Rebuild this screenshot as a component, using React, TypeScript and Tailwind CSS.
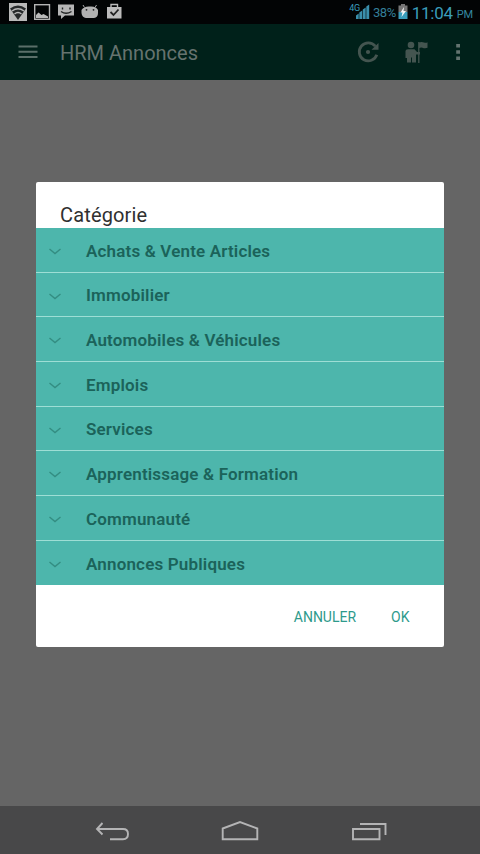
const categories = [
  'Achats & Vente Articles',
  'Immobilier',
  'Automobiles & Véhicules',
  'Emplois',
  'Services',
  'Apprentissage & Formation',
  'Communauté',
  'Annonces Publiques',
];

function StatusBar() {
  return (
    <div className="flex h-6 items-center justify-between bg-[#020405] pr-[7px]">
      <svg width="130" height="24" viewBox="0 0 130 24" fill="none">
        <rect x="9" y="3" width="18" height="18" fill="#b9b9b9" />
        <path d="M10 8.500Q18 2.500 26 8.500L18 20Z" fill="#26292a" />
        <path d="M12 11Q18 6.500 24 11M14.500 14Q18 11 21.500 14" stroke="#b9b9b9" strokeWidth="1.300" />
        <rect x="34.700" y="4.700" width="14.800" height="14.600" stroke="#b4b4b4" strokeWidth="1.400" />
        <path d="M36 18V15L38.500 12.500L41.500 15L43.500 14L48 16.500V18Z" fill="#b9b9b9" />
        <path d="M58 4.500H74V15.500H65L61 19V15.500H58Z" fill="#b5b5b5" />
        <path d="M62.500 7.500V9.500M70 7.500V9.500M61 11.500Q66 15 71.500 11.500" stroke="#202323" strokeWidth="1.400" />
        <path d="M84.500 7.500L83 5M95 7.500L96.500 5" stroke="#aaa" />
        <path d="M81.500 10Q84 6 90 6.500Q96 6 98 10V13Q98 17.500 94 18H86Q82 17.500 81.500 13Z" fill="#b2b2b2" />
        <circle cx="86.500" cy="9.800" r=".9" fill="#222" />
        <circle cx="93.500" cy="9.800" r=".9" fill="#222" />
        <path d="M107 7H121.500V18.500H107Z" fill="#bcbcbc" />
        <path d="M111 7V4.500H117.500V7" stroke="#bcbcbc" strokeWidth="1.400" />
        <path d="M110.500 12L113.500 15L118.500 9.500" stroke="#222" strokeWidth="1.800" />
      </svg>
      <div className="flex h-6 items-center text-[#3a9dbb]">
        <span className="-mr-[5px] mb-[7px] text-[9px] leading-none tracking-[-0.3px]">4G</span>
        <svg width="15" height="24" viewBox="1 0 15 24" fill="#3a8fac">
          <path d="M2 19V15.500L4.700 13.500V19ZM5.300 19V12.500L8.200 10.500V19ZM8.800 19V9.500L11.700 7.500V19ZM12.300 19V6.500L15.200 4.500V19Z" />
        </svg>
        <span className="ml-[3px] mt-[2px] text-[13px] leading-6 tracking-[-0.45px] text-[#347f98]">38%</span>
        <svg width="10" height="24" viewBox="0 0 10 24" className="ml-[2px]">
          <path d="M3 4H7V5.500H9.500V12H.5V5.500H3Z" fill="#777" />
          <path d="M.5 12H9.500V19H.5Z" fill="#3a9dbb" />
          <path d="M6 7L2.500 12.500H4.500L3.500 17L8 11H5.500Z" fill="#f5f5f5" />
        </svg>
        <span className="ml-[4px] mt-px text-[17px] leading-6 tracking-[-0.25px] text-[#3a9dbb]">11:04</span>
        <span className="ml-[4px] mt-[4px] text-[11px] leading-none tracking-[-0.2px] text-[#3587a0]">PM</span>
      </div>
    </div>
  );
}

function AppBar() {
  return (
    <header className="flex h-14 items-center bg-[#00211a] text-[#66736f]">
      <svg width="60" height="56" viewBox="0 0 60 56" stroke="#5a6f69" strokeWidth="2">
        <path d="M18.500 22.500H37.500M18.500 27.700H37.500M18.500 33H37.500" />
      </svg>
      <h1 className="flex-1 pt-px text-[20px]">HRM Annonces</h1>
      <svg width="130" height="56" viewBox="350 24 130 56" fill="none">
        <path d="M375.300 46.200A9 9 0 1 0 376.800 54.800" stroke="#445550" strokeWidth="2.800" />
        <path d="M371.500 49.800H378.500V43Z" fill="#445550" />
        <circle cx="368" cy="52" r="2.100" fill="#445550" />
        <circle cx="411" cy="45" r="3.300" fill="#445550" />
        <path d="M405.500 51Q405.500 49.200 408 49.200H414.500L417 52H420V54.500H416V62.500H412V57.500H411V62.500H407V58H405.500Z" fill="#445550" />
        <path d="M418.800 42V63" stroke="#445550" strokeWidth="1.300" />
        <path d="M419 42.500Q421.500 41.300 424 42.500Q426 43.200 427.500 42.300V47.800Q425 48.800 422.500 47.700Q421 47 419 48Z" fill="#445550" />
        <path d="M456.200 44H460V47.500H456.200ZM456.200 50.200H460V53.700H456.200ZM456.200 56.500H460V60H456.200Z" fill="#63736f" />
      </svg>
    </header>
  );
}

function CategoryDialog() {
  return (
    <section className="flex h-[465px] w-[408px] flex-col overflow-hidden rounded-[2px] bg-white">
      <h2 className="h-[46px] shrink-0 pl-6 pt-[21px] text-[20px] leading-6 tracking-[0.15px] text-[#303030]">Catégorie</h2>
      <ul className="grid h-[357px] shrink-0 auto-rows-[44.7px] divide-y divide-[#9eded5] overflow-hidden bg-[#4db6ac]">
        {categories.map((name) => (
          <li key={name} className="flex min-h-0 items-center pl-3 pt-[2px]">
            <svg width="14" height="14" viewBox="0 0 14 14" fill="none" stroke="#348d82" strokeWidth="1.400">
              <path d="M1.500 5L7 9.500L12.500 5" />
            </svg>
            <span className="ml-6 pt-px text-[17px] font-semibold tracking-[0.17px] text-[#1b635a]">{name}</span>
          </li>
        ))}
      </ul>
      <div className="flex flex-1 items-center justify-end gap-[35px] pr-[34.5px] pt-[2px] text-[14px] text-[#2e9a8c]">
        <button>ANNULER</button>
        <button>OK</button>
      </div>
    </section>
  );
}

function NavigationBar() {
  return (
    <nav className="h-12 bg-[#484849]">
      <svg width="480" height="48" viewBox="0 806 480 48" fill="none" stroke="#b4b4b5" strokeWidth="1.900">
        <path d="M102.500 823L97 829L102.500 834.500M97.500 829H123Q128 829 128 834Q128 839.200 123 839.200H110" />
        <path d="M222.700 839.200V828.500L240 822L257.300 828.500V839.200Z" />
        <path d="M353 829H379.500V839.300H353Z" />
        <path d="M360 824H385.500V835" />
      </svg>
    </nav>
  );
}

export default function App() {
  return (
    <div className="flex h-[854px] w-[480px] flex-col overflow-hidden bg-[#656565] font-[Roboto,sans-serif]">
      <StatusBar />
      <AppBar />
      <main className="flex flex-1 items-start justify-center pt-[102px]">
        <CategoryDialog />
      </main>
      <NavigationBar />
    </div>
  );
}
